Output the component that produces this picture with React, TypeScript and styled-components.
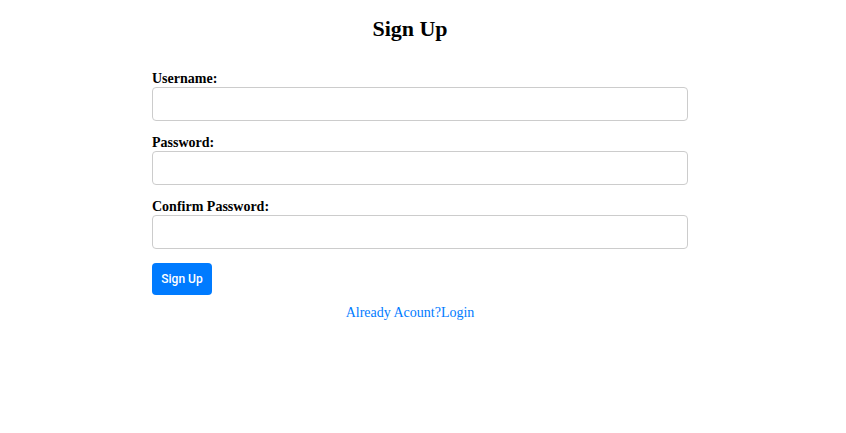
import React, { useState } from 'react';
import styled, { createGlobalStyle } from 'styled-components';

const GlobalStyle = createGlobalStyle`
  * { box-sizing: border-box; }
  body {
    margin: 0;
    background: #fff;
    color: #000;
    font-family: "Liberation Serif", "Times New Roman", serif;
  }
`;

const Page = styled.main`
  padding: 16px 26px 16px 0;
`;

const Panel = styled.section`
  max-width: 516px;
  margin: 0 auto;
`;

const Title = styled.h2`
  margin: 0 0 29px;
  font-size: 22px;
  line-height: 25px;
  text-align: center;
`;

const Form = styled.form`
  display: flex;
  flex-direction: column;
  align-items: flex-start;
  gap: 14px;
  margin-right: -20px;
`;

const Fields = styled.div`
  display: flex;
  flex-direction: column;
  gap: 13px;
  width: 100%;
`;

const Field = styled.div`
  width: 100%;
`;

const Label = styled.label`
  display: block;
  font-size: 14px;
  font-weight: bold;
  line-height: 17px;
`;

const Input = styled.input`
  display: block;
  width: 100%;
  height: 34px;
  padding: 8px;
  border: 1px solid #ccc;
  border-radius: 4px;
  background: #fff;
  font-size: 14px;
`;

const SubmitButton = styled.button`
  min-width: 60px;
  height: 32px;
  padding: 0 8px;
  border: 0;
  border-radius: 4px;
  background: #007bff;
  color: #fff;
  font-family: Roboto, sans-serif;
  font-size: 12px;
  font-weight: 500;
  cursor: pointer;
`;

const Footer = styled.p`
  margin: 8px 0 0;
  font-size: 14px;
  line-height: 20px;
  text-align: center;
`;

const LoginLink = styled.a`
  color: #007bff;
  text-decoration: none;
`;

const fields = [
  { id: 'username', label: 'Username:', type: 'text' },
  { id: 'password', label: 'Password:', type: 'password' },
  { id: 'confirm', label: 'Confirm Password:', type: 'password' },
];

export default function App() {
  const [values, setValues] = useState<Record<string, string>>({});

  return (
    <>
      <GlobalStyle />
      <Page>
        <Panel>
          <Title>Sign Up</Title>
          <Form onSubmit={(event) => event.preventDefault()}>
            <Fields>
              {fields.map(({ id, label, type }) => (
                <Field key={id}>
                  <Label htmlFor={id}>{label}</Label>
                  <Input
                    id={id}
                    type={type}
                    value={values[id] ?? ''}
                    onChange={(event) => setValues({ ...values, [id]: event.target.value })}
                  />
                </Field>
              ))}
            </Fields>
            <SubmitButton type="submit">Sign Up</SubmitButton>
          </Form>
          <Footer>
            <LoginLink href="#login">Already Acount?Login</LoginLink>
          </Footer>
        </Panel>
      </Page>
    </>
  );
}
